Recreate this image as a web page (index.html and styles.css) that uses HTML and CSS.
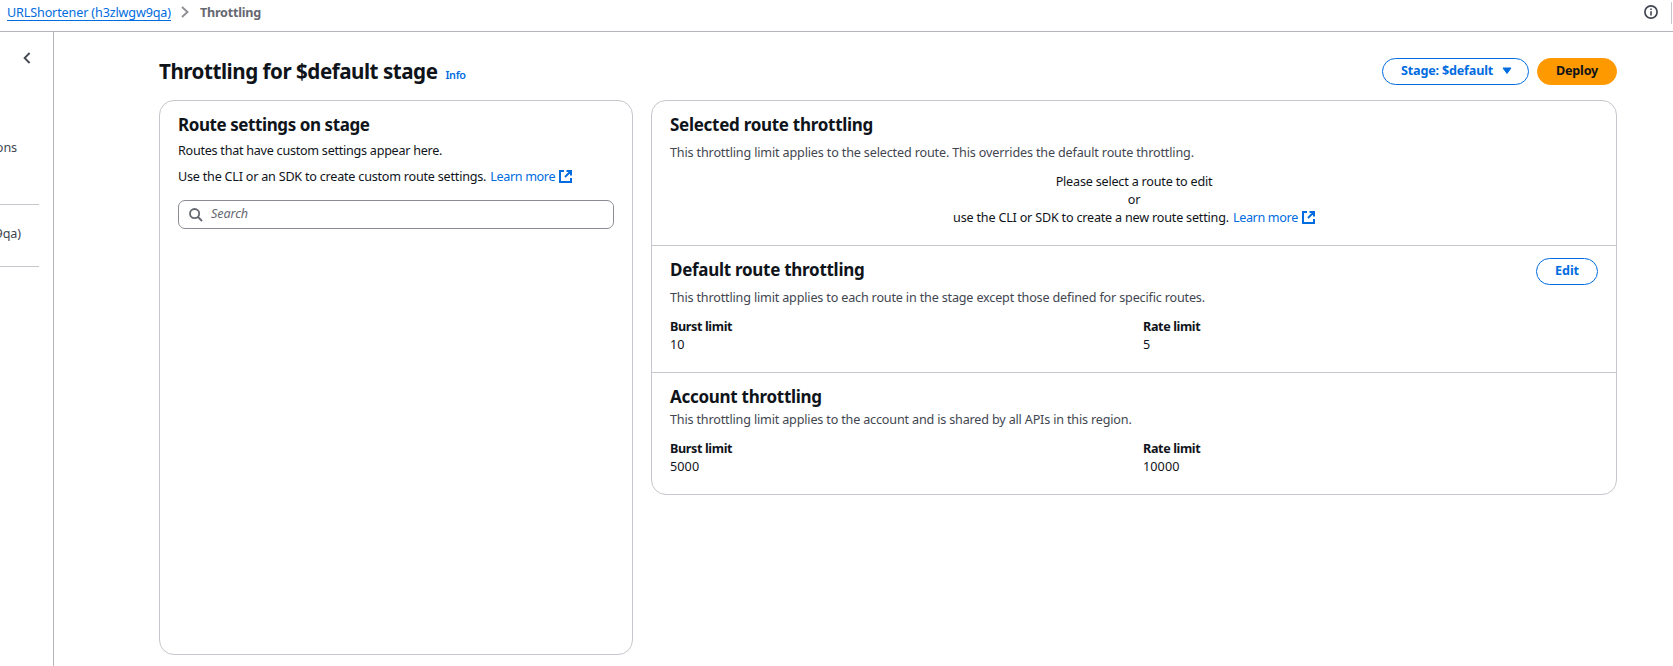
FILE: index.html
```html
<!DOCTYPE html>
<html lang="en">
<head>
<meta charset="utf-8">
<title>Throttling</title>
<link rel="stylesheet" href="styles.css">
</head>
<body>
<svg class="defs" aria-hidden="true">
  <symbol id="external" viewBox="0 0 13 13">
    <path d="M5 1H1v11h11V8M7.5 1H12v4.5M6 7l5.6-5.6" fill="none" stroke="currentColor" stroke-width="2"/>
  </symbol>
</svg>
<header class="topbar">
  <nav class="crumbs">
    <a class="crumb-link" href="#">URLShortener (h3zlwgw9qa)</a>
    <svg class="crumb-sep" viewBox="0 0 8 12"><path d="M1 1l5.5 5L1 11" fill="none" stroke="currentColor" stroke-width="1.8"/></svg>
    <span class="crumb-current">Throttling</span>
  </nav>
  <div class="tools">
    <svg class="info-icon" viewBox="0 0 14 14"><circle cx="7" cy="7" r="6.1" fill="none" stroke="currentColor" stroke-width="1.7"/><path d="M7 6.2v4.2M7 3.5v1.6" fill="none" stroke="currentColor" stroke-width="1.6"/></svg>
    <span class="tools-divider"></span>
  </div>
</header>
<div class="shell">
  <aside class="sidebar">
    <svg class="collapse" viewBox="0 0 8 12"><path d="M6.6 1L1.6 6l5 5" fill="none" stroke="currentColor" stroke-width="1.8"/></svg>
    <div class="side-item first">ons</div>
    <hr class="rule">
    <div class="side-item second">9qa)</div>
    <hr class="rule">
  </aside>
  <main class="content">
    <div class="page-head">
      <h1>Throttling for $default stage</h1>
      <a class="info" href="#">Info</a>
      <div class="actions">
        <button class="btn stage">Stage: $default<svg class="caret" viewBox="0 0 10 8"><path d="M1 1h8L5 6.5z" fill="currentColor" stroke="currentColor" stroke-linejoin="round"/></svg></button>
        <button class="btn primary">Deploy</button>
      </div>
    </div>
    <div class="columns">
      <section class="card routes">
        <h2>Route settings on stage</h2>
        <p class="intro">Routes that have custom settings appear here.</p>
        <p class="intro second-line"><span>Use the CLI or an SDK to create custom route settings.</span><a class="learn" href="#">Learn more<svg class="ext"><use href="#external"/></svg></a></p>
        <label class="search">
          <svg class="glass" viewBox="0 0 14 14"><circle cx="5.6" cy="5.6" r="4.6" fill="none" stroke="currentColor" stroke-width="1.8"/><path d="M9 9l4 4" stroke="currentColor" stroke-width="1.8"/></svg>
          <input type="text" placeholder="Search">
        </label>
      </section>
      <section class="card limits">
        <div class="block selected">
          <h2>Selected route throttling</h2>
          <p class="desc">This throttling limit applies to the selected route. This overrides the default route throttling.</p>
          <div class="empty">
            <p>Please select a route to edit</p>
            <p>or</p>
            <p class="empty-last"><span>use the CLI or SDK to create a new route setting.</span><a class="learn" href="#">Learn more<svg class="ext"><use href="#external"/></svg></a></p>
          </div>
        </div>
        <div class="block default">
          <div class="block-head"><h2>Default route throttling</h2><button class="btn edit">Edit</button></div>
          <p class="desc">This throttling limit applies to each route in the stage except those defined for specific routes.</p>
          <dl class="pairs">
            <div><dt>Burst limit</dt><dd>10</dd></div>
            <div><dt>Rate limit</dt><dd>5</dd></div>
          </dl>
        </div>
        <div class="block account">
          <h2>Account throttling</h2>
          <p class="desc">This throttling limit applies to the account and is shared by all APIs in this region.</p>
          <dl class="pairs">
            <div><dt>Burst limit</dt><dd>5000</dd></div>
            <div><dt>Rate limit</dt><dd>10000</dd></div>
          </dl>
        </div>
      </section>
    </div>
  </main>
</div>
</body>
</html>
```
FILE: styles.css
```css
* { box-sizing: border-box; }
body {
  margin: 0;
  height: 666px;
  overflow: hidden;
  display: flex;
  flex-direction: column;
  background: #fff;
  color: #0f141a;
  font: 12.6px/18px "Noto Sans", "Open Sans", sans-serif;
  letter-spacing: -0.17px;
}
h1, h2, p, dl, dd { margin: 0; }
a { color: #006ce0; text-decoration: none; }
.defs { display: none; }
svg { display: block; flex: none; }

.topbar {
  flex: none;
  height: 32px;
  display: flex;
  justify-content: space-between;
  border-bottom: 1px solid #b4b4bb;
}
.crumbs { display: flex; padding: 4px 0 0 7px; }
.crumb-link { height: 17px; border-bottom: 1px solid #006ce0; letter-spacing: -0.14px; }
.crumb-sep { width: 8px; height: 12px; margin: 2px 11px 0 10px; color: #8c8c94; }
.crumb-current { font-weight: 700; color: #656871; letter-spacing: -0.23px; }
.tools { display: flex; color: #424650; }
.info-icon { width: 14px; height: 14px; margin: 5px 13px 0 0; }
.tools-divider { width: 1px; height: 22px; margin: 2px 1px 0 0; background: #c6c6cd; }

.shell { flex: 1; display: flex; min-height: 0; }
.sidebar {
  width: 54px;
  border-right: 1px solid #b4b4bb;
  color: #424650;
  overflow: hidden;
}
.collapse { width: 8px; height: 12px; margin: 20px 0 0 23px; }
.side-item { display: flex; justify-content: flex-end; letter-spacing: -0.1px; }
.first { width: 17px; margin: 75px 0 47px; }
.second { width: 21px; margin: 20px 0 23px; }
.rule { width: 39px; height: 1px; margin: 0; border: 0; background: #c6c6cd; }

.content { flex: 1; padding: 26px 56px 0 105px; }
.page-head { display: flex; align-items: flex-start; height: 42px; }
h1 { font-size: 20.6px; font-weight: 700; line-height: 27px; letter-spacing: -0.48px; }
.info { margin: 8px 0 0 8px; font-size: 10.8px; font-weight: 600; letter-spacing: -0.35px; }
.actions { display: flex; gap: 8px; margin-left: auto; }
.btn {
  height: 27px;
  padding: 0 0 2px;
  border: 1px solid #006ce0;
  border-radius: 14px;
  background: #fff;
  color: #006ce0;
  font: 700 12.6px/18px "Noto Sans", "Open Sans", sans-serif;
  letter-spacing: -0.18px;
  display: flex;
  align-items: center;
  justify-content: center;
}
.stage { width: 147px; padding-left: 2px; }
.caret { width: 10px; height: 8px; margin: 1px 0 0 9px; }
.primary { width: 80px; border-color: #ff9900; background: #ff9900; color: #0f141a; }
.edit { width: 62px; letter-spacing: -0.05px; }

.columns { display: grid; grid-template-columns: 474px 966px; gap: 18px; align-items: start; }
.card { border: 1px solid #c6c6cd; border-radius: 15px; }
h2 { font-size: 17px; font-weight: 700; line-height: 22px; letter-spacing: -0.28px; }
.routes { height: 555px; padding: 13px 18px 0; }
.routes h2 { letter-spacing: -0.42px; }
.intro { margin-top: 6px; letter-spacing: -0.26px; }
.second-line { display: flex; margin-top: 8px; letter-spacing: -0.22px; }
.learn { display: flex; margin-left: 4px; letter-spacing: -0.35px; }
.ext { width: 13px; height: 13px; margin: 2px 0 0 4px; }
.search {
  display: flex;
  height: 29px;
  margin-top: 14px;
  padding-left: 10px;
  border: 1px solid #8c8c94;
  border-radius: 7px;
  color: #656871;
}
.glass { width: 14px; height: 14px; margin-top: 7px; }
.search input {
  flex: 1;
  height: 18px;
  margin: 4px 0 0 8px;
  padding: 0;
  border: 0;
  outline: 0;
  font: 12.6px/18px "Noto Sans", "Open Sans", sans-serif;
  letter-spacing: -0.1px;
}
.search input::placeholder { color: #656871; font-style: italic; opacity: 1; }

.block { padding: 13px 18px 0; }
.block + .block { border-top: 1px solid #c6c6cd; }
.selected { height: 144px; }
.default { height: 127px; }
.account { height: 122px; }
.desc { margin-top: 8px; color: #424650; letter-spacing: -0.155px; }
.default .desc, .account .desc { letter-spacing: -0.172px; }
.account .desc { margin-top: 3px; }
.empty { margin-top: 11px; display: flex; flex-direction: column; align-items: center; letter-spacing: -0.2px; }
.empty-last { display: flex; }
.block-head { display: flex; justify-content: space-between; height: 22px; }
.block-head .btn { margin-top: -1px; }
.pairs { display: grid; grid-template-columns: 1fr 1fr; gap: 18px; margin-top: 11px; }
dt { font-weight: 700; letter-spacing: -0.38px; }
dd { letter-spacing: 0.1px; }
```
